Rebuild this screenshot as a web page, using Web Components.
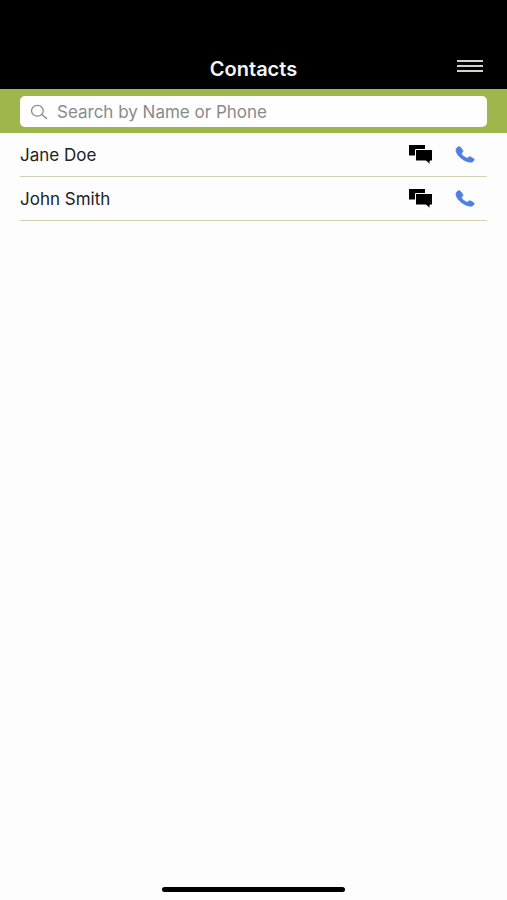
<!DOCTYPE html>
<html lang="en">
<head>
<meta charset="utf-8">
<meta name="viewport" content="width=device-width, initial-scale=1">
<title>Contacts</title>
<style>
  body {
    margin: 0;
    background: #fdfdfd;
    color: #222;
    font-family: Inter, "Liberation Sans", sans-serif;
  }
</style>
</head>
<body>
<contacts-app>
  <app-header slot="top">Contacts</app-header>
  <search-bar slot="top" placeholder="Search by Name or Phone"></search-bar>
  <contact-row>Jane Doe</contact-row>
  <contact-row>John Smith</contact-row>
</contacts-app>

<script>
const define = (name, html, setup) => {
  const template = document.createElement("template");
  template.innerHTML = html;
  customElements.define(
    name,
    class extends HTMLElement {
      constructor() {
        super();
        this.attachShadow({ mode: "open" });
        this.shadowRoot.appendChild(template.content.cloneNode(true));
      }

      connectedCallback() {
        if (setup) setup(this, this.shadowRoot);
      }
    }
  );
};

define("contacts-app", /* html */ `
<style>
  :host {
    display: flex;
    flex-direction: column;
    min-height: 100vh;
  }
  main {
    flex: 1;
    padding: 0 20px;
  }
  footer {
    display: flex;
    justify-content: center;
    padding: 8px 0;
  }
  .home {
    width: 36%;
    height: 5px;
    border-radius: 3px;
    background: #000;
  }
</style>
<slot name="top"></slot>
<main><slot></slot></main>
<footer><div class="home"></div></footer>
`);

define("app-header", /* html */ `
<style>
  :host {
    display: block;
    padding-top: 48px;
    background: #000;
    color: #f4f4f4;
  }
  header {
    display: grid;
    grid-template-columns: 1fr auto 1fr;
    align-items: center;
    height: 41px;
    padding: 0 20px;
  }
  h1 {
    grid-column: 2;
    margin: 0;
    font-size: 20px;
    font-weight: 600;
    line-height: 24px;
  }
  button {
    justify-self: end;
    padding: 4px;
    border: 0;
    background: none;
    color: #d2d0d3;
  }
  svg {
    display: block;
  }
</style>
<header>
  <h1><slot></slot></h1>
  <button type="button" aria-label="Menu">
    <svg width="26" height="18" viewBox="0 0 26 18" stroke="currentColor" stroke-width="2">
      <path d="M0 1h26M0 6h26M0 11h26"/>
    </svg>
  </button>
</header>
`);

define("search-bar", /* html */ `
<style>
  :host {
    display: block;
    padding: 7px 20px 6px;
    background: #9fb64c;
  }
  label {
    display: flex;
    align-items: center;
    gap: 9px;
    height: 31px;
    padding: 0 10px;
    border-radius: 5px;
    background: #fefefe;
    color: #8a8a8a;
  }
  svg {
    flex: none;
  }
  input {
    flex: 1;
    min-width: 0;
    padding: 0;
    border: 0;
    outline: 0;
    background: none;
    color: #222;
    font: inherit;
    font-size: 17px;
    line-height: 24px;
  }
  input::placeholder {
    color: #8a8a8a;
    opacity: 1;
  }
</style>
<label>
  <svg width="18" height="16" viewBox="0 0 18 16" fill="none" stroke="currentColor" stroke-width="1.3" stroke-linecap="round" aria-hidden="true">
    <ellipse cx="7.4" cy="6.8" rx="5.9" ry="5.4"/>
    <path d="M11.8 10.6l4.8 4"/>
  </svg>
  <input type="search" aria-label="Search contacts">
</label>
`, (host, root) => {
  root.querySelector("input").placeholder = host.getAttribute("placeholder");
});

define("contact-row", /* html */ `
<style>
  :host {
    display: flex;
    align-items: center;
    height: 43px;
    border-bottom: 1px solid #d3d3b4;
  }
  .name {
    flex: 1;
    font-size: 17px;
    line-height: 24px;
  }
  .actions {
    display: flex;
    gap: 22px;
    padding-right: 12px;
  }
  button {
    padding: 0;
    border: 0;
    background: none;
  }
  svg {
    display: block;
  }
</style>
<span class="name"><slot></slot></span>
<div class="actions">
  <button type="button" aria-label="Message">
    <svg width="25" height="20" viewBox="0 0 25 20">
      <path d="M1 0h16v10.5H1z"/>
      <path d="M7.500 4.500h17V16H22v3.500L18 16H7.500z" stroke="#fdfdfd"/>
    </svg>
  </button>
  <button type="button" aria-label="Call">
    <svg width="20" height="20" viewBox="0 0 20 20" fill="#4f7fe0" stroke="#4f7fe0" stroke-width=".8" stroke-linejoin="round">
      <path d="M2 2.800C2.700 2 3.500 1.600 4.300 1.700c.6.100 1.100.5 1.500 1l1.800 2.500c.5.700.4 1.300-.1 1.900l-.8.9c-.3.400-.3.800 0 1.200 1.200 1.700 2.700 2.900 4.800 3.800.4.200.9.200 1.200-.1l1-.7c.6-.5 1.300-.5 2-.1l2.500 1.400c.8.400 1.100.9.900 1.500-.3.800-1.100 1.600-2 1.900-1.900.6-4.600 0-7.400-1.500C5.800 13.500 2.600 10.600 1.400 7.100.9 5.400.9 4 2 2.800z"/>
    </svg>
  </button>
</div>
`);
</script>
</body>
</html>
